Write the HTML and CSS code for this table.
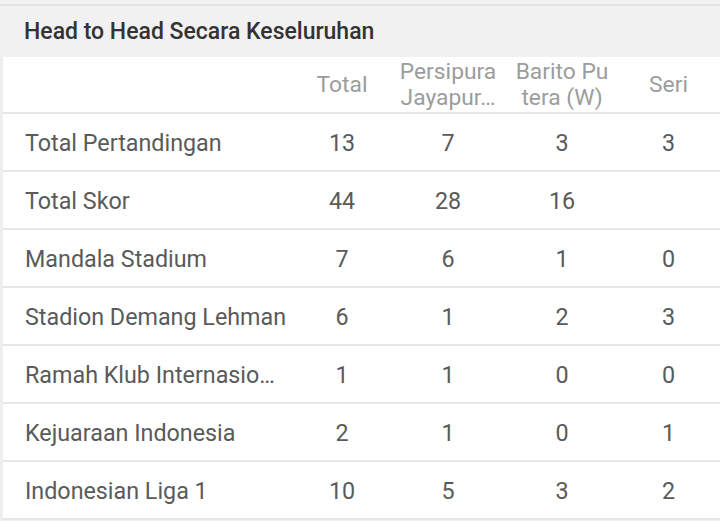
FILE: index.html
```html
<!DOCTYPE html>
<html lang="id">
<head>
<meta charset="utf-8">
<title>Head to Head</title>
<link rel="stylesheet" href="styles.css">
</head>
<body>
<div class="page">
  <div class="topline"></div>
  <div class="card-title">Head to Head Secara Keseluruhan</div>
  <div class="table">
    <div class="row head">
      <div class="cell label"></div>
      <div class="cell num"><span class="hd">Total</span></div>
      <div class="cell num"><span class="hd two"><span class="ln">Persipura</span><span class="ln">Jayapur…</span></span></div>
      <div class="cell num"><span class="hd two"><span class="ln">Barito Pu</span><span class="ln">tera (W)</span></span></div>
      <div class="cell num seri"><span class="hd">Seri</span></div>
    </div>
    <div class="row">
      <div class="cell label">Total Pertandingan</div>
      <div class="cell num">13</div><div class="cell num">7</div><div class="cell num">3</div><div class="cell num seri">3</div>
    </div>
    <div class="row">
      <div class="cell label">Total Skor</div>
      <div class="cell num">44</div><div class="cell num">28</div><div class="cell num">16</div><div class="cell num seri"></div>
    </div>
    <div class="row">
      <div class="cell label">Mandala Stadium</div>
      <div class="cell num">7</div><div class="cell num">6</div><div class="cell num">1</div><div class="cell num seri">0</div>
    </div>
    <div class="row">
      <div class="cell label">Stadion Demang Lehman</div>
      <div class="cell num">6</div><div class="cell num">1</div><div class="cell num">2</div><div class="cell num seri">3</div>
    </div>
    <div class="row">
      <div class="cell label">Ramah Klub Internasio…</div>
      <div class="cell num">1</div><div class="cell num">1</div><div class="cell num">0</div><div class="cell num seri">0</div>
    </div>
    <div class="row">
      <div class="cell label">Kejuaraan Indonesia</div>
      <div class="cell num">2</div><div class="cell num">1</div><div class="cell num">0</div><div class="cell num seri">1</div>
    </div>
    <div class="row">
      <div class="cell label">Indonesian Liga 1</div>
      <div class="cell num">10</div><div class="cell num">5</div><div class="cell num">3</div><div class="cell num seri">2</div>
    </div>
  </div>
</div>
</body>
</html>
```
FILE: styles.css
```css
html, body {
  margin: 0;
  padding: 0;
  background: #efefef;
}
.page {
  width: 720px;
  height: 521px;
  overflow: hidden;
  font-family: Roboto, "Liberation Sans", Arial, sans-serif;
  background: #efefef;
}
.topline {
  height: 4px;
  border-bottom: 2px solid #e3e3e3;
  background: #f2f2f2;
}
.card-title {
  height: 51px;
  box-sizing: border-box;
  padding: 12px 0 0 24px;
  background: #f1f1f1;
  color: #333333;
  font-size: 23px;
  font-weight: 500;
  line-height: 28px;
}
.table {
  margin-left: 3px;
  background: #ffffff;
}
.row {
  display: grid;
  grid-template-columns: 298px 82px 130px 98px 1fr;
  height: 56px;
  box-sizing: content-box;
  border-bottom: 2px solid #e6e6e6;
  align-items: center;
  color: #5a5a5a;
  font-size: 23.3px;
}
.row.body {
  padding-top: 2px;
  height: 54px;
}
.row:not(.head) {
  padding-top: 2px;
  height: 54px;
}
.row.head {
  height: 55px;
}
.cell.label {
  padding-left: 22px;
  white-space: nowrap;
  overflow: hidden;
}
.cell.num {
  text-align: center;
  display: flex;
  justify-content: center;
}
.cell.seri {
  padding-left: 6px;
}
.hd {
  color: #9c9c9c;
  font-size: 22.8px;
  line-height: 27px;
}
.two {
  display: flex;
  flex-direction: column;
  align-items: center;
  line-height: 26px;
}
.ln {
  white-space: nowrap;
}
```
